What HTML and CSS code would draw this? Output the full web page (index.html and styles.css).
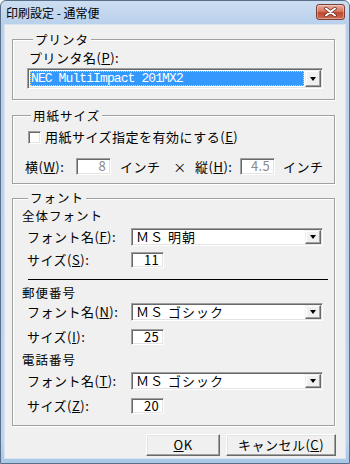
FILE: index.html
```html
<!DOCTYPE html>
<html lang="ja">
<head>
  <meta charset="UTF-8">
  <title>印刷設定 - 通常便</title>
  <link rel="stylesheet" href="styles.css">
</head>
<body>
  <div class="window">
    <!-- Title bar -->
    <div class="titlebar">
      <span class="title">印刷設定 - 通常便</span>
      <div class="close-btn">
        <svg width="13" height="10" viewBox="0 0 13 10">
          <path d="M2 1.5 L11 8.5 M11 1.5 L2 8.5" stroke="#5a2a22" stroke-width="3.4" stroke-linecap="round"/>
          <path d="M2 1.5 L11 8.5 M11 1.5 L2 8.5" stroke="#fff" stroke-width="2" stroke-linecap="round"/>
        </svg>
      </div>
    </div>

    <div class="client">
      <!-- Printer -->
      <div class="group group-printer">
        <div class="group-title">プリンタ</div>
        <div class="field-label">プリンタ名(<u>P</u>):</div>
        <div class="combo combo-printer">
          <div class="combo-value"><span class="selected-text">NEC MultiImpact 201MX2</span></div>
          <div class="combo-arrow"><span class="tri"></span></div>
        </div>
      </div>

      <!-- Paper size -->
      <div class="group group-paper">
        <div class="group-title">用紙サイズ</div>
        <div class="check-row">
          <span class="checkbox"></span>
          <span>用紙サイズ指定を有効にする(<u>E</u>)</span>
        </div>
        <div class="size-row">
          <span class="size-label">横(<u>W</u>):</span>
          <span class="edit edit-paper disabled">8</span>
          <span class="unit">インチ</span>
          <span class="times">×</span>
          <span class="size-label size-label-h">縦(<u>H</u>):</span>
          <span class="edit edit-paper disabled">4.5</span>
          <span class="unit unit-last">インチ</span>
        </div>
      </div>

      <!-- Fonts -->
      <div class="group group-font">
        <div class="group-title">フォント</div>

        <div class="sub-heading first">全体フォント</div>
        <div class="row row-combo r1">
          <span class="row-label">フォント名(<u>F</u>):</span>
          <div class="combo combo-font">
            <div class="combo-value">ＭＳ 明朝</div>
            <div class="combo-arrow"><span class="tri"></span></div>
          </div>
        </div>
        <div class="row row-size r2">
          <span class="row-label">サイズ(<u>S</u>):</span>
          <span class="edit edit-font">11</span>
        </div>

        <div class="separator"></div>

        <div class="sub-heading after-sep">郵便番号</div>
        <div class="row row-combo r3">
          <span class="row-label">フォント名(<u>N</u>):</span>
          <div class="combo combo-font">
            <div class="combo-value">ＭＳ ゴシック</div>
            <div class="combo-arrow"><span class="tri"></span></div>
          </div>
        </div>
        <div class="row row-size r4">
          <span class="row-label">サイズ(<u>I</u>):</span>
          <span class="edit edit-font">25</span>
        </div>

        <div class="sub-heading mid">電話番号</div>
        <div class="row row-combo r5">
          <span class="row-label">フォント名(<u>T</u>):</span>
          <div class="combo combo-font">
            <div class="combo-value">ＭＳ ゴシック</div>
            <div class="combo-arrow"><span class="tri"></span></div>
          </div>
        </div>
        <div class="row row-size r6">
          <span class="row-label">サイズ(<u>Z</u>):</span>
          <span class="edit edit-font">20</span>
        </div>
      </div>

      <!-- Buttons -->
      <div class="buttons">
        <div class="btn btn-ok"><u>O</u>K</div>
        <div class="btn btn-cancel">キャンセル(<u>C</u>)</div>
      </div>
    </div>
  </div>
</body>
</html>
```

FILE: styles.css
```css
/* General */
body {
  margin: 0;
  font-family: "Noto Sans CJK JP", "Noto Sans", sans-serif;
  font-size: 13px;
  letter-spacing: 0.5px;
  color: #000;
  background: #fff;
}

u {
  text-decoration: underline;
  text-underline-offset: 1px;
}

/* Window frame */
.window {
  box-sizing: border-box;
  width: 350px;
  height: 464px;
  display: flex;
  flex-direction: column;
  border: 1px solid #5a6f8a;
  border-radius: 6px 6px 0 0;
  background: linear-gradient(#cddef2, #bad1eb 22px, #bcd4ee 440px, #a9c7e6);
  padding: 0 3px 4px;
  overflow: hidden;
}

.titlebar {
  height: 23px;
  display: flex;
  justify-content: space-between;
  padding-left: 2px;
}

.title {
  font-size: 12px;
  letter-spacing: 0;
  line-height: 23px;
}

.close-btn {
  box-sizing: border-box;
  width: 29px;
  height: 16px;
  margin-top: 3px;
  margin-right: 1px;
  border: 1px solid #7b4035;
  border-radius: 3px;
  background: linear-gradient(#e8b0a2, #d5775f 45%, #c1462d 55%, #cc6c52);
  box-shadow: inset 0 0 0 1px rgba(255, 255, 255, 0.35);
  display: flex;
  align-items: center;
  justify-content: center;
}

/* Client area */
.client {
  flex: 1;
  background: #f0f0f0;
  padding: 15px 11px 0 8px;
  display: flex;
  flex-direction: column;
  box-shadow: inset 0 0 0 1px #d9e4f1;
}

/* Group boxes */
.group {
  display: flex;
  flex-direction: column;
  border: 1px solid #a0a0a0;
  box-shadow: inset 1px 1px #fff, 1px 1px #fff;
}

.group-title {
  align-self: flex-start;
  margin: -8px 0 0 6px;
  padding: 0 2px;
  background: #f0f0f0;
  font-size: 12.5px;
  letter-spacing: 1px;
  line-height: 15px;
}

.group-printer {
  padding: 0 0 10px 14px;
}

.group-paper {
  margin-top: 15px;
  padding: 0 0 8px 12px;
}

.group-font {
  margin-top: 14px;
  padding: 0 0 10px 9px;
}

.group-font .group-title {
  margin-top: -9px;
}

.field-label {
  margin: 3px 0 0 2px;
  line-height: 16px;
}

/* 3D borders */
.combo,
.edit,
.checkbox {
  box-sizing: border-box;
  border: 1px solid;
  border-color: #a0a0a0 #fff #fff #a0a0a0;
  box-shadow: inset 1px 1px #696969, inset -1px -1px #e3e3e3;
  background: #fff;
}

/* Combo boxes */
.combo {
  display: flex;
  padding: 1px;
}

.combo-value {
  flex: 1;
  padding-left: 3px;
  white-space: nowrap;
}

.combo-arrow {
  box-sizing: border-box;
  width: 16px;
  border: 1px solid;
  border-color: #f0f0f0 #696969 #696969 #f0f0f0;
  box-shadow: inset -1px -1px #a0a0a0, inset 1px 1px #fff;
  background: #f0f0f0;
  display: flex;
  align-items: center;
  justify-content: center;
}

.tri {
  width: 0;
  height: 0;
  margin-top: 1px;
  border-left: 3.5px solid transparent;
  border-right: 3.5px solid transparent;
  border-top: 4px solid #000;
}

.combo-printer {
  margin-top: 2px;
  width: 296px;
  height: 21px;
}

.combo-printer .combo-value {
  padding: 1px;
  display: flex;
}

.selected-text {
  flex: 1;
  box-sizing: border-box;
  background: #3399ff;
  outline: 1px dotted #e8d870;
  outline-offset: -1px;
  color: #fff;
  font-family: "Liberation Mono", "DejaVu Sans Mono", monospace;
  font-size: 13px;
  letter-spacing: -0.9px;
  line-height: 15px;
  padding-left: 1px;
}

.combo-font {
  width: 192px;
  height: 18px;
}

.combo-font .combo-value {
  line-height: 14px;
  padding-left: 3px;
  letter-spacing: 1px;
}

/* Checkbox row */
.check-row {
  margin: 6px 0 0 3px;
  height: 16px;
  display: flex;
  align-items: center;
  line-height: 16px;
}

.checkbox {
  width: 13px;
  height: 13px;
  margin-right: 4px;
}

/* Paper size row */
.size-row {
  margin-top: 13px;
  height: 17px;
  display: flex;
  align-items: center;
  line-height: 17px;
}

.size-label {
  width: 51px;
  white-space: nowrap;
}

.size-label-h {
  width: 45px;
  margin-left: 5px;
}

.edit {
  text-align: right;
  padding-right: 4px;
  letter-spacing: 0.3px;
}

.edit-paper {
  width: 35px;
  height: 17px;
  line-height: 14px;
}

.disabled {
  color: #8a8a8a;
}

.unit {
  width: 50px;
  margin-left: 9px;
}

.unit-last {
  margin-left: 8px;
}

.times {
  width: 20px;
  text-align: center;
}

/* Font rows */
.sub-heading {
  font-size: 12.5px;
  letter-spacing: 1px;
  line-height: 15px;
}

.sub-heading.first {
  margin-top: 3px;
  line-height: 16px;
}

.sub-heading.after-sep {
  margin-top: 5px;
}

.sub-heading.mid {
  margin-top: 6px;
}

.row {
  display: flex;
  align-items: center;
  margin-left: 5px;
}

.row-label {
  width: 104px;
  white-space: nowrap;
}

.r1 { margin-top: 3px; }
.r2 { margin-top: 4px; }
.r3 { margin-top: 2px; }
.r4 { margin-top: 6px; }
.r5 { margin-top: 4px; }
.r6 { margin-top: 6px; }

.edit-font {
  width: 33px;
  height: 16px;
  line-height: 14px;
}

.separator {
  margin: 10px 6px 0 6px;
  height: 1px;
  background: #000;
}

/* Buttons */
.buttons {
  display: flex;
  justify-content: flex-end;
  gap: 6px;
  margin: 8px -1px 0 0;
}

.btn {
  box-sizing: border-box;
  height: 22px;
  border: 1px solid;
  border-color: #fff #696969 #696969 #fff;
  box-shadow: inset -1px -1px #a0a0a0, inset 1px 1px #e3e3e3;
  background: #f0f0f0;
  text-align: center;
  line-height: 19px;
}

.btn-ok {
  width: 74px;
}

.btn-cancel {
  width: 110px;
}
```
